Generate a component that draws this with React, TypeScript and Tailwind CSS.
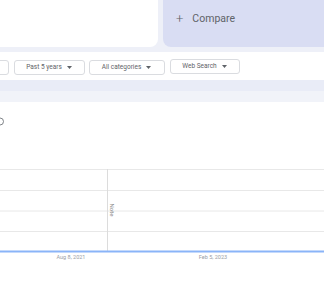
import React from "react";

function Chip({ label, className }: { label: string; className: string }) {
  return (
    <div
      className={`h-[15px] shrink-0 rounded-[3px] border border-[#dadce0] bg-white flex items-center justify-center gap-[5px] text-[6.5px] text-[#5f6368] ${className}`}
    >
      <span>{label}</span>
      <svg width="5" height="3" viewBox="0 0 5 3">
        <path d="M0 0 L5 0 L2.5 3 Z" fill="#5f6368" />
      </svg>
    </div>
  );
}

export default function App() {
  return (
    <div
      className="w-[324px] h-[290px] bg-white overflow-hidden"
      style={{ fontFamily: "Roboto, 'Liberation Sans', sans-serif" }}
    >
      {/* top cards */}
      <div className="h-[52px] bg-[#eef0f8] flex items-start gap-[5px]">
        <div className="w-[158px] h-[47px] bg-white rounded-br-[8px]" />
        <div className="flex-1 h-[47px] bg-[#d9ddf3] rounded-bl-[8px] flex items-start pl-[13px] pt-[13px] text-[#5f6368]">
          <span className="text-[13px] font-light leading-[12px]">+</span>
          <span className="ml-[9px] text-[10.5px] leading-[12px]">Compare</span>
        </div>
      </div>

      {/* filter chips */}
      <div className="h-[28px] bg-white flex items-center pt-[3px]">
        <Chip label="" className="w-[60px] -ml-[51px]" />
        <Chip label="Past 5 years" className="w-[71px] ml-[4.5px]" />
        <Chip label="All categories" className="w-[76px] ml-[4px]" />
        <Chip label="Web Search" className="w-[70px] ml-[5px] -translate-y-[1px]" />
      </div>

      {/* bands */}
      <div className="h-[11px] bg-[#e9ecf7]" />
      <div className="h-[11px] bg-[#f1f3f9]" />

      {/* help icon row */}
      <div className="h-[60px] flex items-start pt-[15px]">
        <svg width="8" height="9" viewBox="0 0 8 9" className="-ml-[4px]">
          <circle cx="4" cy="4.5" r="3.5" fill="none" stroke="#70757a" strokeWidth="0.9" />
        </svg>
      </div>

      {/* chart */}
      <svg width="324" height="128" viewBox="0 0 324 128" className="block">
        <g stroke="#e8e8e8" strokeWidth="1">
          <line x1="0" y1="7.5" x2="324" y2="7.5" />
          <line x1="0" y1="28.5" x2="324" y2="28.5" />
          <line x1="0" y1="49" x2="324" y2="49" />
          <line x1="0" y1="69.5" x2="324" y2="69.5" />
        </g>
        <line x1="107.5" y1="7" x2="107.5" y2="89" stroke="#dcdcdc" strokeWidth="1" />
        <line x1="0" y1="89.5" x2="324" y2="89.5" stroke="#8ab4f8" strokeWidth="2" />
        <text
          x="0"
          y="0"
          transform="translate(109.5 48) rotate(90)"
          fontSize="6"
          fill="#8a8a8a"
          textAnchor="middle"
        >
          Note
        </text>
        <text x="71" y="97" fontSize="5.5" fill="#9aa0a6" textAnchor="middle">
          Aug 8, 2021
        </text>
        <text x="213" y="97" fontSize="5.5" fill="#9aa0a6" textAnchor="middle">
          Feb 5, 2023
        </text>
      </svg>
    </div>
  );
}
